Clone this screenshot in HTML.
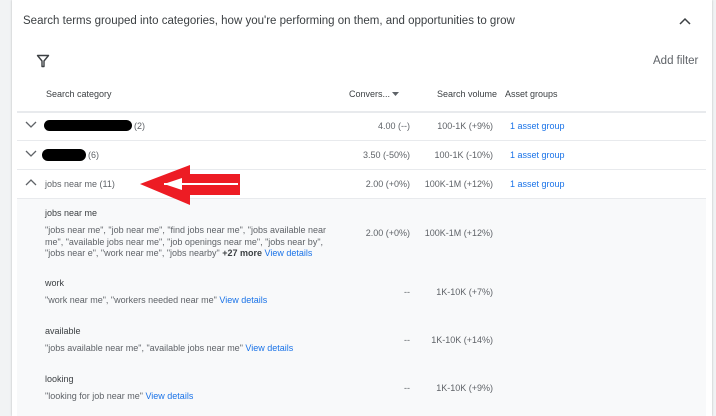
<!DOCTYPE html>
<html><head><style>
*{margin:0;padding:0;box-sizing:border-box}
body{width:716px;height:416px;overflow:hidden;background:#f1f3f4;font-family:"Liberation Sans",Arial,sans-serif;position:relative;color:#3c4043}
.card{position:absolute;left:12px;top:0;width:700px;height:416px;background:#fff;box-shadow:0 0 2px rgba(0,0,0,.25)}
.a{position:absolute;white-space:nowrap}
.t{font-size:11px;color:#5f6368}
.s{font-size:9px;color:#3c4043}
.sep{position:absolute;left:17px;width:689px;height:1px;background:#e8eaed}
.link{color:#1a73e8}
.r{text-align:right}
.blob{position:absolute;background:#000;border-radius:6px}
</style></head><body>
<div class="card"></div>
<div class="a" style="left:23px;top:15px;font-size:11.5px;color:#3c4043">Search terms grouped into categories, how you're performing on them, and opportunities to grow</div>
<svg class="a" style="left:678px;top:16px" width="14" height="10"><path d="M2 8 L7 3 L12 8" stroke="#3c4043" stroke-width="1.5" fill="none"/></svg>
<svg class="a" style="left:36px;top:54px" width="14" height="14"><path d="M1.5 1.5 H12.5 L8 7 V12.5 H6 V7 Z" stroke="#3c4043" stroke-width="1.4" fill="none" stroke-linejoin="round"/></svg>
<div class="a" style="left:653px;top:55px;font-size:11.5px;color:#5f6368">Add filter</div>
<div class="a s" style="left:46px;top:89px">Search category</div>
<div class="a s" style="left:349px;top:89px">Convers...</div>
<svg class="a" style="left:392px;top:92px" width="8" height="5"><path d="M0 0 H7 L3.5 4 Z" fill="#5f6368"/></svg>
<div class="a s" style="left:437px;top:89px">Search volume</div>
<div class="a s" style="left:505px;top:89px">Asset groups</div>
<div class="sep" style="top:111px;height:2px"></div>
<div class="sep" style="top:140px"></div>
<div class="sep" style="top:169px"></div>
<div class="sep" style="top:198px"></div>
<div class="a" style="left:17px;top:199px;width:689px;height:217px;background:#f8f9fa"></div>
<svg class="a" style="left:25px;top:121px" width="12" height="8"><path d="M1 1 L6 6 L11 1" stroke="#5f6368" stroke-width="1.3" fill="none"/></svg>
<div class="blob" style="left:44px;top:120px;width:88px;height:11px"></div>
<div class="a t" style="left:134px;top:121px;font-size:9px">(2)</div>
<div class="a t r" style="left:320px;width:90px;top:121px;font-size:9px">4.00 (--)</div>
<div class="a t r" style="left:400px;width:93px;top:121px;font-size:9px">100-1K (+9%)</div>
<div class="a link" style="left:510px;top:121px;font-size:9px">1 asset group</div>
<svg class="a" style="left:25px;top:150px" width="12" height="8"><path d="M1 1 L6 6 L11 1" stroke="#5f6368" stroke-width="1.3" fill="none"/></svg>
<div class="blob" style="left:42px;top:149px;width:44px;height:12px"></div>
<div class="a t" style="left:88px;top:150px;font-size:9px">(6)</div>
<div class="a t r" style="left:320px;width:90px;top:150px;font-size:9px">3.50 (-50%)</div>
<div class="a t r" style="left:400px;width:93px;top:150px;font-size:9px">100-1K (-10%)</div>
<div class="a link" style="left:510px;top:150px;font-size:9px">1 asset group</div>
<svg class="a" style="left:25px;top:178px" width="12" height="8"><path d="M1 7 L6 2 L11 7" stroke="#5f6368" stroke-width="1.3" fill="none"/></svg>
<div class="a t" style="left:45px;top:179px;font-size:9px">jobs near me (11)</div>
<div class="a t r" style="left:320px;width:90px;top:179px;font-size:9px">2.00 (+0%)</div>
<div class="a t r" style="left:400px;width:93px;top:179px;font-size:9px">100K-1M (+12%)</div>
<div class="a link" style="left:510px;top:179px;font-size:9px">1 asset group</div>
<svg class="a" style="left:138px;top:163px" width="104" height="44"><path d="M2 21 L52 2 V11 H102 V32 H52 V42 Z" fill="#ed1c24"/><path d="M26 21 H100" stroke="#fff" stroke-width="2"/><path d="M26 21 L44 15 V27 Z" fill="#fff"/></svg>
<div class="a s" style="left:45px;top:208px">jobs near me</div>
<div class="a t" style="left:45px;top:225px;font-size:9px;line-height:11.5px">"jobs near me", "job near me", "find jobs near me", "jobs available near<br>me", "available jobs near me", "job openings near me", "jobs near by",<br>"jobs near e", "work near me", "jobs nearby" <b style="color:#3c4043">+27 more</b> <span class="link">View details</span></div>
<div class="a t r" style="left:320px;width:90px;top:228px;font-size:9px">2.00 (+0%)</div>
<div class="a t r" style="left:400px;width:93px;top:228px;font-size:9px">100K-1M (+12%)</div>
<div class="a s" style="left:45px;top:278px">work</div>
<div class="a t" style="left:45px;top:295px;font-size:9px">"work near me", "workers needed near me" <span class="link">View details</span></div>
<div class="a t r" style="left:320px;width:90px;top:287px;font-size:9px">--</div>
<div class="a t r" style="left:400px;width:93px;top:287px;font-size:9px">1K-10K (+7%)</div>
<div class="a s" style="left:45px;top:326px">available</div>
<div class="a t" style="left:45px;top:343px;font-size:9px">"jobs available near me", "available jobs near me" <span class="link">View details</span></div>
<div class="a t r" style="left:320px;width:90px;top:335px;font-size:9px">--</div>
<div class="a t r" style="left:400px;width:93px;top:335px;font-size:9px">1K-10K (+14%)</div>
<div class="a s" style="left:45px;top:374px">looking</div>
<div class="a t" style="left:45px;top:391px;font-size:9px">"looking for job near me" <span class="link">View details</span></div>
<div class="a t r" style="left:320px;width:90px;top:383px;font-size:9px">--</div>
<div class="a t r" style="left:400px;width:93px;top:383px;font-size:9px">1K-10K (+9%)</div>
</body></html>
